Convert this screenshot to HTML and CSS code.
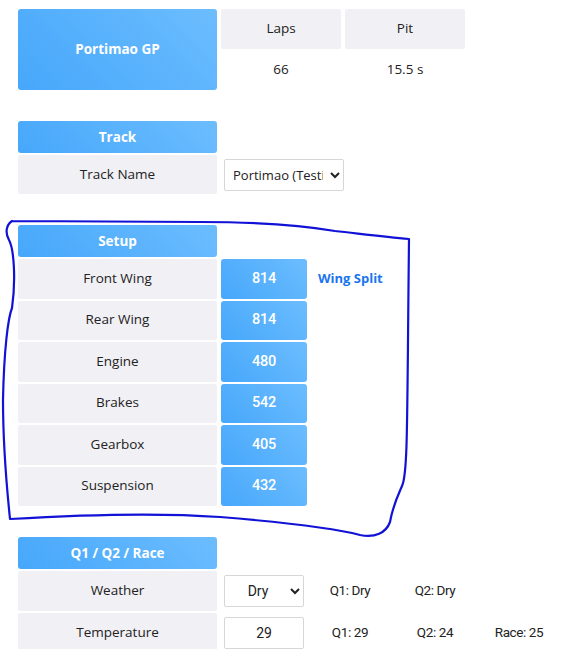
FILE: index.html
```html
<!DOCTYPE html>
<html lang="en">
<head>
    <meta charset="UTF-8">
    <meta name="viewport" content="width=device-width, initial-scale=1.0">
    <title>Race Setup</title>
    <link rel="stylesheet" href="styles.css">
</head>
<body>
    <!-- Race summary -->
    <div class="summary">
        <div class="gp-name blue">Portimao GP</div>
        <div class="cell">Laps</div>
        <div class="cell">Pit</div>
        <div class="plain">66</div>
        <div class="plain">15.5 s</div>
    </div>

    <!-- Track -->
    <div class="section track">
        <div class="head blue">Track</div>
        <div class="spacer"></div>
        <div class="cell">Track Name</div>
        <div class="field">
            <select class="track-select">
                <option>Portimao (Testing)</option>
            </select>
        </div>
    </div>

    <!-- Setup -->
    <div class="section setup">
        <div class="head blue">Setup</div>
        <div class="spacer"></div>
        <div class="spacer"></div>

        <div class="cell">Front Wing</div>
        <div class="value blue">814</div>
        <div class="split">Wing Split</div>

        <div class="cell">Rear Wing</div>
        <div class="value blue">814</div>
        <div></div>

        <div class="cell">Engine</div>
        <div class="value blue">480</div>
        <div></div>

        <div class="cell">Brakes</div>
        <div class="value blue">542</div>
        <div></div>

        <div class="cell">Gearbox</div>
        <div class="value blue">405</div>
        <div></div>

        <div class="cell">Suspension</div>
        <div class="value blue">432</div>
        <div></div>
    </div>

    <!-- Sessions -->
    <div class="section sessions">
        <div class="head blue">Q1 / Q2 / Race</div>
        <div class="spacer"></div>
        <div class="spacer"></div>
        <div class="spacer"></div>
        <div class="spacer"></div>

        <div class="cell">Weather</div>
        <div class="field">
            <select class="small-select">
                <option>Dry</option>
                <option>Wet</option>
            </select>
        </div>
        <div class="note">Q1: Dry</div>
        <div class="note">Q2: Dry</div>
        <div class="note"></div>

        <div class="cell">Temperature</div>
        <div class="field">
            <input class="small-input" type="text" value="29">
        </div>
        <div class="note">Q1: 29</div>
        <div class="note">Q2: 24</div>
        <div class="note">Race: 25</div>
    </div>

    <!-- hand-drawn highlight over the setup block -->
    <svg class="scribble" width="562" height="649" viewBox="0 0 562 649">
        <path d="M 12 221 C 6 225, 5 233, 9 240 C 14 249, 16 280, 12 308 C 8 318, 4 350, 3 400 C 3 445, 7 490, 10 519 C 60 516, 150 512, 220 517 C 280 522, 330 527, 360 535 C 375 538, 386 533, 390 522 C 393 505, 399 493, 402 486 C 408 474, 407 420, 409 239 C 385 237, 362 234, 335 231 C 300 225, 250 222, 200 222 L 12 221"
              fill="none" stroke="#1212d6" stroke-width="2.2" stroke-linecap="round" stroke-linejoin="round"/>
    </svg>
</body>
</html>
```

FILE: styles.css
```css
/* General Styles */
body {
    font-family: "Open Sans", Arial, sans-serif;
    font-size: 13.5px;
    background-color: white;
    color: #222;
    margin: 0;
    padding: 9px 18px;
    position: relative;
}

.blue {
    background: linear-gradient(45deg, #46a7fb, #6cbdfe);
    color: white;
    border-radius: 3px;
    font-weight: 700;
}

.cell {
    background-color: #f1f0f5;
    border-radius: 2px;
    display: flex;
    align-items: center;
    justify-content: center;
    padding-bottom: 2px;
    box-sizing: border-box;
}

/* Summary */
.summary {
    display: grid;
    grid-template-columns: 199px 120px 120px;
    grid-template-rows: 40px 41px;
    gap: 0 4px;
}

.gp-name {
    grid-row: span 2;
    display: flex;
    align-items: center;
    justify-content: center;
    font-size: 13.5px;
    padding-bottom: 2px;
}

.plain {
    display: flex;
    align-items: center;
    justify-content: center;
    padding-bottom: 2px;
}

/* Sections */
.section {
    display: grid;
    gap: 2px 4px;
    margin-top: 31px;
}

.head {
    height: 32px;
    display: flex;
    align-items: center;
    justify-content: center;
    font-size: 13.5px;
    padding-bottom: 1px;
    box-sizing: border-box;
}

.track {
    grid-template-columns: 199px 130px;
    grid-template-rows: 32px 39px;
}

.field {
    display: flex;
    align-items: center;
    padding-left: 3px;
}

.track-select {
    width: 120px;
    height: 32px;
    font-family: "Open Sans", Arial, sans-serif;
    font-size: 13px;
    color: #222;
    border: 1px solid #d6d6d6;
    border-radius: 2px;
    background: white;
    padding: 0 4px;
}

/* Setup */
.setup {
    grid-template-columns: 199px 86px 80px;
    grid-template-rows: 32px repeat(6, 39.5px);
}

.value {
    display: flex;
    align-items: center;
    justify-content: center;
    font-family: Roboto, Arial, sans-serif;
    font-weight: 500;
    font-size: 14.5px;
    letter-spacing: -0.3px;
    padding-bottom: 1px;
}

.split {
    display: flex;
    align-items: center;
    padding-left: 7px;
    padding-bottom: 2px;
    color: #1a75f0;
    font-weight: 700;
    font-size: 13px;
}

/* Sessions */
.sessions {
    grid-template-columns: 199px 86px 78px 84px 76px;
    grid-template-rows: 32px 40px 40px;
}

.small-select,
.small-input {
    width: 80px;
    height: 32px;
    box-sizing: border-box;
    font-family: Roboto, Arial, sans-serif;
    font-size: 14px;
    color: #222;
    border: 1px solid #d6d6d6;
    border-radius: 2px;
    background: white;
    text-align: center;
    text-align-last: center;
}

.note {
    display: flex;
    align-items: center;
    justify-content: center;
    padding-bottom: 2px;
    font-family: Roboto, Arial, sans-serif;
    font-size: 13.5px;
    letter-spacing: -0.4px;
}

.scribble {
    position: absolute;
    top: 0;
    left: 0;
    pointer-events: none;
}
```
